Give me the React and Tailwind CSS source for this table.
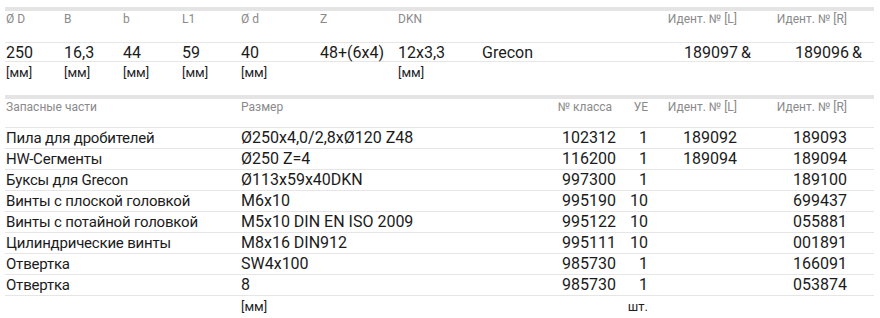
import React from 'react';

const specHead = ['Ø D', 'B', 'b', 'L1', 'Ø d', 'Z', 'DKN', '', 'Идент. № [L]', 'Идент. № [R]'];
const specVals = ['250', '16,3', '44', '59', '40', '48+(6x4)', '12x3,3', 'Grecon', '189097', '189096'];
const specUnits = ['[мм]', '[мм]', '[мм]', '[мм]', '[мм]', '', '[мм]', '', '', ''];

const parts = [
  ['Пила для дробителей', 'Ø250x4,0/2,8xØ120 Z48', '102312', '1', '189092', '189093'],
  ['HW-Сегменты', 'Ø250 Z=4', '116200', '1', '189094', '189094'],
  ['Буксы для Grecon', 'Ø113x59x40DKN', '997300', '1', '', '189100'],
  ['Винты с плоской головкой', 'M6x10', '995190', '10', '', '699437'],
  ['Винты с потайной головкой', 'M5x10 DIN EN ISO 2009', '995122', '10', '', '055881'],
  ['Цилиндрические винты', 'M8x16 DIN912', '995111', '10', '', '001891'],
  ['Отвертка', 'SW4x100', '985730', '1', '', '166091'],
  ['Отвертка', '8', '985730', '1', '', '053874'],
];

const topCols = 'grid grid-cols-[58px_59px_59px_59px_79px_78px_84px_167px_103px_111px_1fr]';
const partCols = 'grid grid-cols-[235px_300px_76px_32px_89px_110px_1fr]';

const App = () => {
  return (
    <div className="w-[880px] h-[318px] bg-white text-[#1b1b1b] font-['Roboto','Liberation_Sans',sans-serif] overflow-hidden">
      <div className="ml-[5px] w-[869px] pt-[7px]">
        <div className="h-[4px] bg-[#e4e4e4]" />
        <div className={`${topCols} h-[32px] border-b border-[#e6e6e6] text-[12px] leading-[16px] text-[#8a8a8a]`}>
          {specHead.map((h, i) => (
            <div key={i} className={i >= 8 ? (i === 8 ? 'text-right pr-[14px]' : 'text-right pr-[15px]') : 'pl-[1px]'}>
              {h}
            </div>
          ))}
        </div>
        <div className={`${topCols} h-[19px] border-b border-[#e6e6e6] text-[16px] leading-[20px]`}>
          {specVals.map((v, i) => (
            <div key={i} className={i >= 8 ? 'text-right' : 'pl-[1px]'}>
              {v}
              {i >= 8 && <span className="ml-[3px]">&amp;</span>}
            </div>
          ))}
        </div>
        <div className={`${topCols} h-[33px] pt-[3px] text-[13px] leading-[16px] text-[#1f1f1f]`}>
          {specUnits.map((u, i) => (
            <div key={i} className="pl-[1px]">{u}</div>
          ))}
        </div>

        <div className="h-[4px] bg-[#e4e4e4]" />
        <div className={`${partCols} h-[29px] border-b border-[#e6e6e6] text-[12px] leading-[16px] text-[#8a8a8a]`}>
          <div className="pl-[1px]">Запасные части</div>
          <div className="pl-[1px]">Размер</div>
          <div className="text-right pr-[4px]">№ класса</div>
          <div className="text-right">УЕ</div>
          <div className="text-right">Идент. № [L]</div>
          <div className="text-right">Идент. № [R]</div>
          <div />
        </div>
        {parts.map((p, r) => (
          <div key={r} className={`${partCols} h-[21px] border-b border-[#e6e6e6] text-[16px] leading-[20px]`}>
            <div className="pl-[1px] whitespace-nowrap text-[15px] tracking-[-0.2px]">{p[0]}</div>
            <div className="pl-[1px] whitespace-nowrap">{p[1]}</div>
            <div className="text-right">{p[2]}</div>
            <div className="text-right">{p[3]}</div>
            <div className="text-right">{p[4]}</div>
            <div className="text-right">{p[5]}</div>
            <div />
          </div>
        ))}
        <div className={`${partCols} pt-[3px] text-[13px] leading-[16px] text-[#1f1f1f]`}>
          <div />
          <div className="pl-[1px]">[мм]</div>
          <div />
          <div className="text-right">шт.</div>
          <div />
          <div />
          <div />
        </div>
      </div>
    </div>
  );
};

export default App;
